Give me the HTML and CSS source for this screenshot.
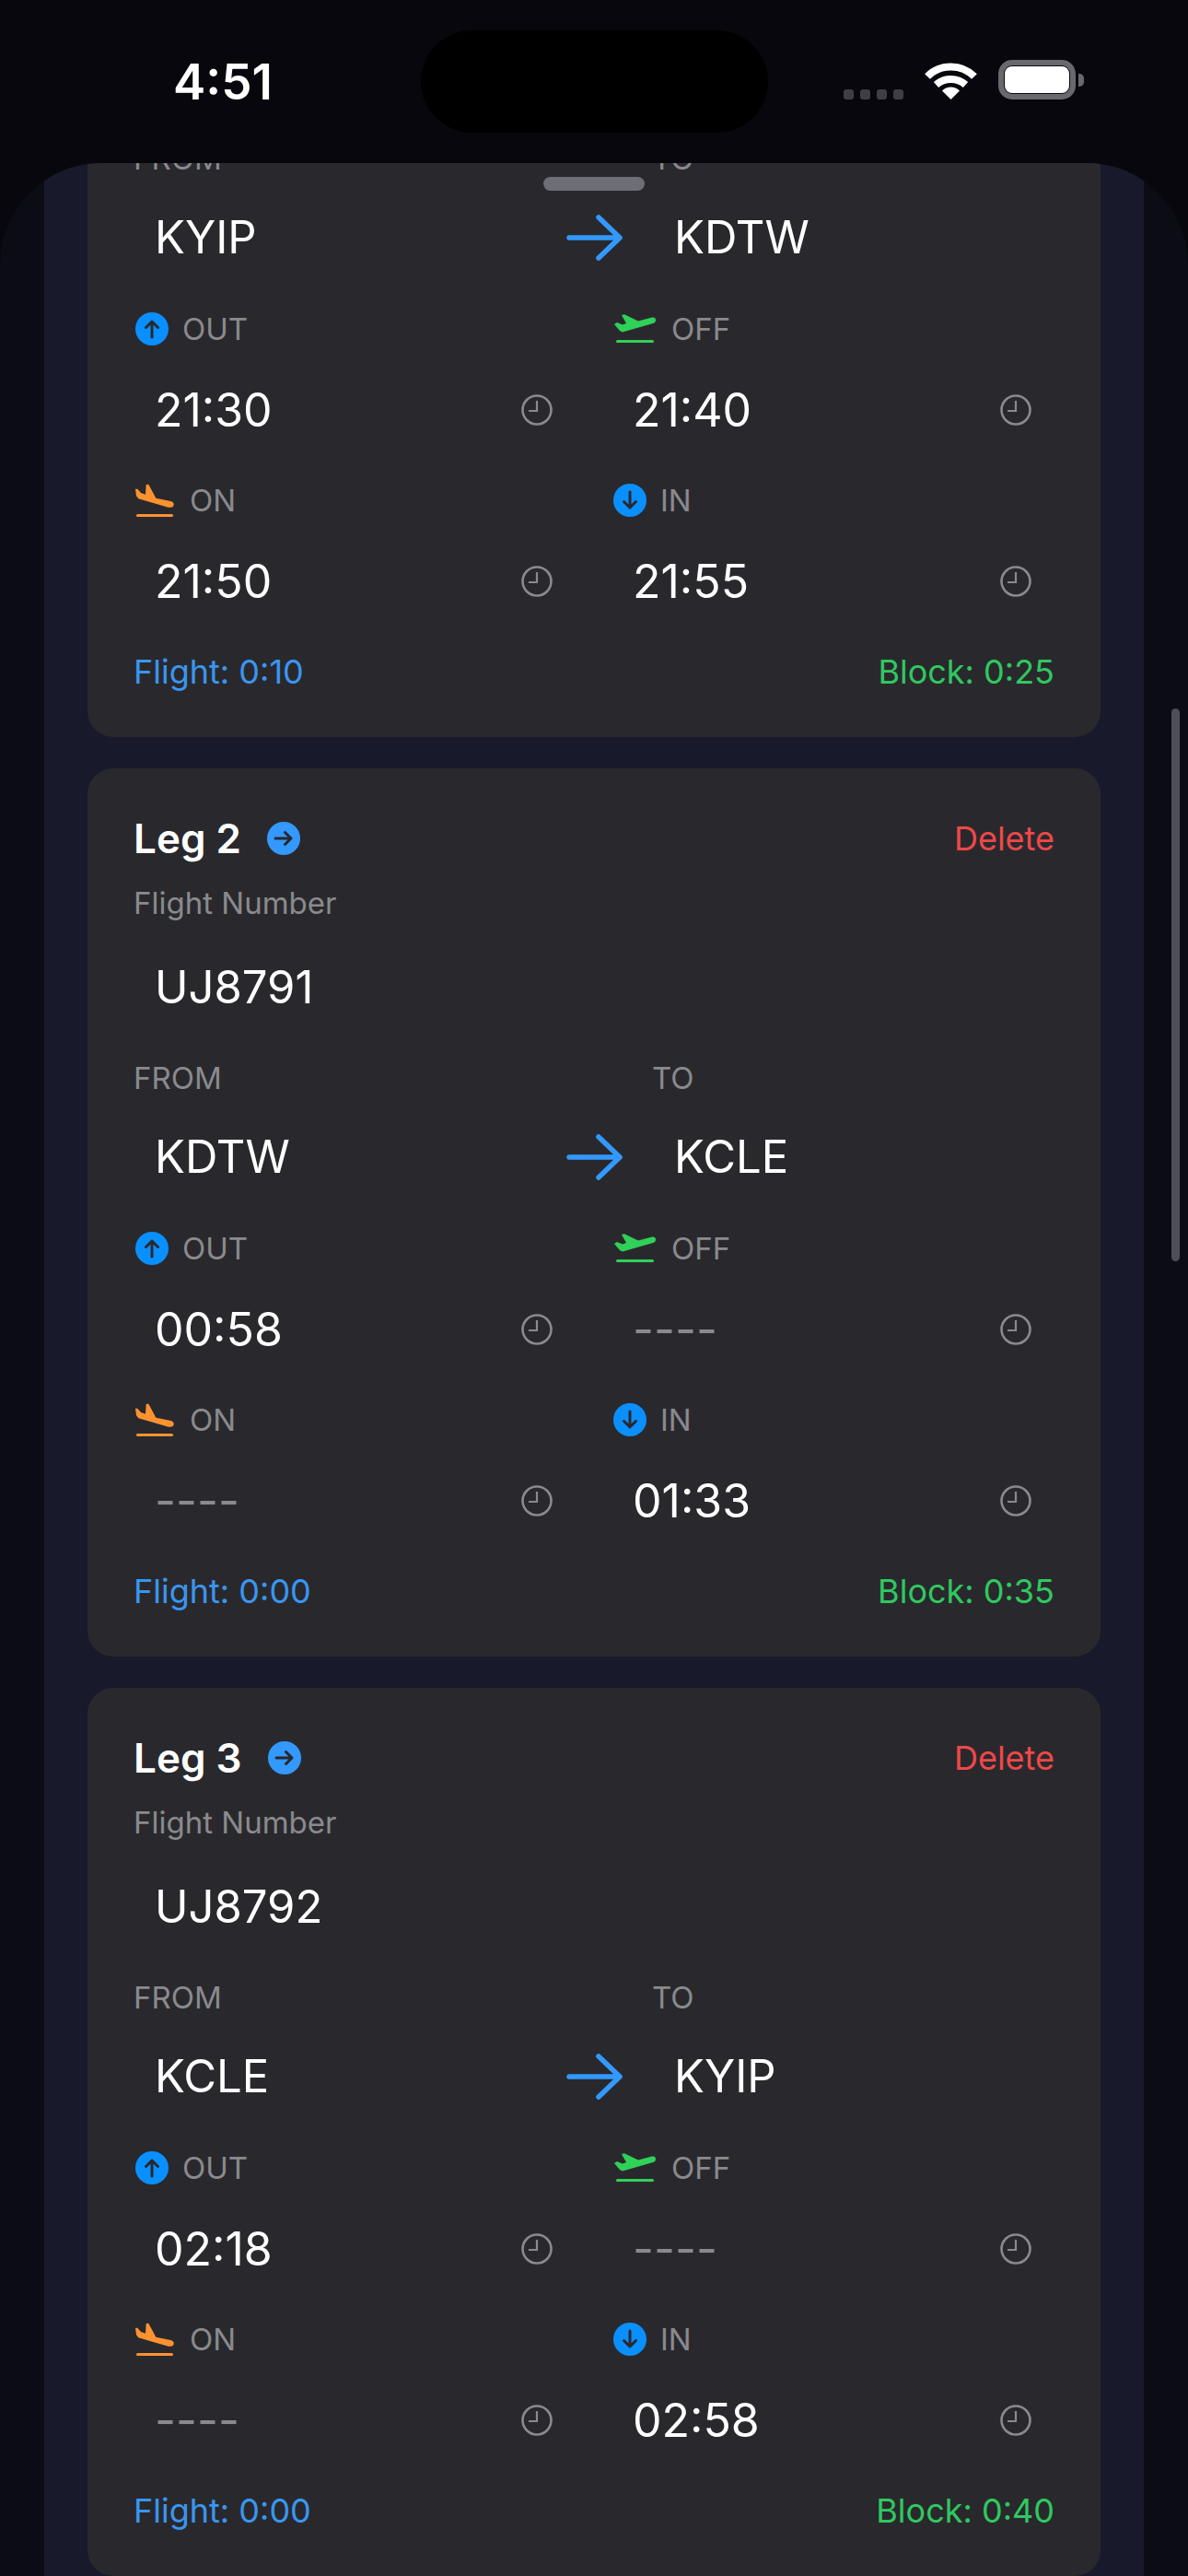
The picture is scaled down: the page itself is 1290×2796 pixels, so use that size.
FILE: index.html
```html
<!DOCTYPE html>
<html lang="en">
  <head>
    <meta charset="UTF-8" />
    <meta name="viewport" content="width=device-width, initial-scale=1.0" />
    <title>Legs</title>
    <link rel="stylesheet" href="styles.css">
  </head>

  <body>
    <svg class="defs" width="0" height="0">
      <symbol id="out" viewBox="0 0 36 36">
        <circle cx="18" cy="18" r="18" fill="#0a8fff" />
        <path d="M18 27V10M11.5 16.5L18 10l6.5 6.5" fill="none" stroke="#28282d" stroke-width="3" stroke-linecap="round" stroke-linejoin="round" />
      </symbol>
      <symbol id="in" viewBox="0 0 36 36">
        <circle cx="18" cy="18" r="18" fill="#0a8fff" />
        <path d="M18 9v17M11.5 19.5L18 26l6.5-6.5" fill="none" stroke="#28282d" stroke-width="3" stroke-linecap="round" stroke-linejoin="round" />
      </symbol>
      <symbol id="off" viewBox="0 0 45 32">
        <path d="M0 11L3 9L9 11.5L13 10L8 1L11 .3L26 7.5L41 3.5Q45 3 45 6.5Q45 9 42 10L9 19.5L6 18Z" fill="#30d158" />
        <rect x="2" y="28" width="41" height="3" rx="1.5" fill="#30d158" />
      </symbol>
      <symbol id="on" viewBox="0 0 42 36">
        <path d="M0 5.7L2.3 5.7L6 10L11 11.7L11.7 1L14.3 .7L22.3 15.7L38.3 19Q41.7 20 41.7 22.5Q41.5 25.7 38 25.7Q36 25.7 35 25.5L3.3 16.3L1 13.3Z" fill="#ff9230" />
        <rect x="1" y="33" width="40" height="3" rx="1.5" fill="#ff9230" />
      </symbol>
      <symbol id="clock" viewBox="0 0 34 34">
        <circle cx="17" cy="17" r="15.5" fill="none" stroke="#8a8a8e" stroke-width="2.6" />
        <path d="M17 7v11h-9" fill="none" stroke="#8a8a8e" stroke-width="2.2" />
      </symbol>
      <symbol id="go" viewBox="0 0 36 36">
        <circle cx="18" cy="18" r="18" fill="#3399ff" />
        <path d="M9 18h17M19.5 11.5L26 18l-6.5 6.500" fill="none" stroke="#28282d" stroke-width="3" stroke-linecap="round" stroke-linejoin="round" />
      </symbol>
      <symbol id="arrow" viewBox="0 0 62 50">
        <path d="M3 25h55M35 3l23 22l-23 22" fill="none" stroke="#3399ff" stroke-width="5.500" stroke-linecap="round" stroke-linejoin="round" />
      </symbol>
    </svg>

    <header class="status">
      <span class="klok">4:51</span>
      <div class="island"></div>
      <div class="status-ikoner">
        <div class="signal"><i></i><i></i><i></i><i></i></div>
        <svg class="wifi" viewBox="0 0 57 42">
          <path d="M3 17A36 36 0 0 1 54 17M12.5 26A24 24 0 0 1 44.500 26" fill="none" stroke="#fff" stroke-width="8" />
          <path d="M28.500 42L19 32.500A13.400 13.400 0 0 1 38 32.500Z" fill="#fff" />
        </svg>
        <div class="batteri"><div class="batteri-fyld"></div></div>
      </div>
    </header>

    <main class="sheet">
      <div class="grabber"></div>
      <div class="scrollbar"></div>
      <div class="liste">

        <!-- scrollet halvt ud af billedet, toppen af kortet ses ikke -->
        <article class="kort kort-scrollet">
          <div class="rute">
            <div>
              <p class="label">FROM</p>
              <p class="vaerdi">KYIP</p>
            </div>
            <svg class="rute-pil"><use href="#arrow" /></svg>
            <div>
              <p class="label">TO</p>
              <p class="vaerdi">KDTW</p>
            </div>
          </div>
          <div class="tider">
            <div>
              <p class="label tid-label"><svg class="ikon-rund"><use href="#out" /></svg>OUT</p>
              <div class="tid"><span>21:30</span><svg class="ur"><use href="#clock" /></svg></div>
            </div>
            <div>
              <p class="label tid-label"><svg class="ikon-off"><use href="#off" /></svg>OFF</p>
              <div class="tid"><span>21:40</span><svg class="ur"><use href="#clock" /></svg></div>
            </div>
            <div>
              <p class="label tid-label"><svg class="ikon-on"><use href="#on" /></svg>ON</p>
              <div class="tid"><span>21:50</span><svg class="ur"><use href="#clock" /></svg></div>
            </div>
            <div>
              <p class="label tid-label"><svg class="ikon-rund"><use href="#in" /></svg>IN</p>
              <div class="tid"><span>21:55</span><svg class="ur"><use href="#clock" /></svg></div>
            </div>
          </div>
          <div class="total">
            <span class="flight">Flight: 0:10</span>
            <span class="block">Block: 0:25</span>
          </div>
        </article>

        <article class="kort">
          <div class="kort-top">
            <h2>Leg 2</h2>
            <svg class="ikon-go"><use href="#go" /></svg>
            <span class="slet">Delete</span>
          </div>
          <p class="label">Flight Number</p>
          <p class="vaerdi">UJ8791</p>
          <div class="rute">
            <div>
              <p class="label">FROM</p>
              <p class="vaerdi">KDTW</p>
            </div>
            <svg class="rute-pil"><use href="#arrow" /></svg>
            <div>
              <p class="label">TO</p>
              <p class="vaerdi">KCLE</p>
            </div>
          </div>
          <div class="tider">
            <div>
              <p class="label tid-label"><svg class="ikon-rund"><use href="#out" /></svg>OUT</p>
              <div class="tid"><span>00:58</span><svg class="ur"><use href="#clock" /></svg></div>
            </div>
            <div>
              <p class="label tid-label"><svg class="ikon-off"><use href="#off" /></svg>OFF</p>
              <div class="tid"><span class="tom">----</span><svg class="ur"><use href="#clock" /></svg></div>
            </div>
            <div>
              <p class="label tid-label"><svg class="ikon-on"><use href="#on" /></svg>ON</p>
              <div class="tid"><span class="tom">----</span><svg class="ur"><use href="#clock" /></svg></div>
            </div>
            <div>
              <p class="label tid-label"><svg class="ikon-rund"><use href="#in" /></svg>IN</p>
              <div class="tid"><span>01:33</span><svg class="ur"><use href="#clock" /></svg></div>
            </div>
          </div>
          <div class="total">
            <span class="flight">Flight: 0:00</span>
            <span class="block">Block: 0:35</span>
          </div>
        </article>

        <article class="kort">
          <div class="kort-top">
            <h2>Leg 3</h2>
            <svg class="ikon-go"><use href="#go" /></svg>
            <span class="slet">Delete</span>
          </div>
          <p class="label">Flight Number</p>
          <p class="vaerdi">UJ8792</p>
          <div class="rute">
            <div>
              <p class="label">FROM</p>
              <p class="vaerdi">KCLE</p>
            </div>
            <svg class="rute-pil"><use href="#arrow" /></svg>
            <div>
              <p class="label">TO</p>
              <p class="vaerdi">KYIP</p>
            </div>
          </div>
          <div class="tider">
            <div>
              <p class="label tid-label"><svg class="ikon-rund"><use href="#out" /></svg>OUT</p>
              <div class="tid"><span>02:18</span><svg class="ur"><use href="#clock" /></svg></div>
            </div>
            <div>
              <p class="label tid-label"><svg class="ikon-off"><use href="#off" /></svg>OFF</p>
              <div class="tid"><span class="tom">----</span><svg class="ur"><use href="#clock" /></svg></div>
            </div>
            <div>
              <p class="label tid-label"><svg class="ikon-on"><use href="#on" /></svg>ON</p>
              <div class="tid"><span class="tom">----</span><svg class="ur"><use href="#clock" /></svg></div>
            </div>
            <div>
              <p class="label tid-label"><svg class="ikon-rund"><use href="#in" /></svg>IN</p>
              <div class="tid"><span>02:58</span><svg class="ur"><use href="#clock" /></svg></div>
            </div>
          </div>
          <div class="total">
            <span class="flight">Flight: 0:00</span>
            <span class="block">Block: 0:40</span>
          </div>
        </article>

      </div>
    </main>
  </body>
</html>
```

FILE: styles.css
```css
* {
  box-sizing: border-box;
}

html,
body {
  height: 2796px;
  overflow: hidden;
}

body {
  margin: 0;
  background-color: #07070d;
  font-family: Inter, "Liberation Sans", sans-serif;
  color: #fff;
}

p,
h2 {
  margin: 0;
}

svg {
  display: block;
  flex-shrink: 0;
}

.defs {
  position: absolute;
}

/* statusbar */
.status {
  height: 177px;
  padding: 33px 112px 0 188px;
  display: flex;
  align-items: flex-start;
}

.klok {
  width: 269px;
  margin-top: 24px;
  font-size: 53px;
  line-height: 64px;
  font-weight: 600;
}

.island {
  width: 377px;
  height: 111px;
  border-radius: 56px;
  background-color: #000;
}

.status-ikoner {
  margin: 32px 0 0 82px;
  display: flex;
  align-items: flex-end;
}

.signal {
  display: flex;
  gap: 7px;
  margin-right: 23px;
}

.signal i {
  width: 11px;
  height: 11px;
  border-radius: 3px;
  background-color: #3e3e44;
}

.wifi {
  width: 57px;
  height: 42px;
}

.batteri {
  position: relative;
  width: 84px;
  height: 43px;
  margin-left: 23px;
  padding: 1px;
  border: 6px solid #68686e;
  border-radius: 15px;
}

.batteri::after {
  content: "";
  position: absolute;
  left: 81px;
  top: 9px;
  width: 6px;
  height: 14px;
  border-radius: 0 5px 5px 0;
  background-color: #68686e;
}

.batteri-fyld {
  height: 29px;
  border-radius: 8px;
  background-color: #fff;
}

/* sheet */
.sheet {
  position: relative;
  height: 2619px;
  padding: 0 48px;
  overflow: hidden;
  border-radius: 110px 110px 0 0;
  background-color: #0c0c14;
}

.grabber {
  position: absolute;
  left: 590px;
  top: 15px;
  width: 110px;
  height: 15px;
  border-radius: 8px;
  background-color: #6e6e76;
}

.scrollbar {
  position: absolute;
  left: 1272px;
  top: 592px;
  width: 9px;
  height: 600px;
  border-radius: 5px;
  background-color: #4e4e56;
}

.liste {
  display: flow-root;
  height: 100%;
  padding: 0 47px;
  background-color: #19192c;
}

.kort {
  height: 964px;
  margin-bottom: 34px;
  padding: 50px;
  border-radius: 28px;
  background-color: #29292d;
}

/* kortet er scrollet, saa kun bunden er tilbage */
.kort-scrollet {
  height: 647px;
  margin-top: -24px;
  padding-top: 0;
}

.kort-scrollet .rute {
  margin-top: 0;
}

.kort-top {
  height: 52px;
  margin-bottom: 25px;
  display: flex;
  align-items: center;
}

h2 {
  font-size: 44px;
  line-height: 52px;
  font-weight: 600;
}

.ikon-go {
  width: 36px;
  height: 36px;
  margin-left: 28px;
}

.slet {
  margin-left: auto;
  font-size: 36px;
  color: #f04848;
}

.label {
  height: 40px;
  font-size: 33px;
  line-height: 38px;
  color: #8a8a8e;
}

.vaerdi {
  height: 70px;
  margin-top: 36px;
  padding-left: 23px;
  font-size: 49px;
  line-height: 70px;
}

.rute {
  margin-top: 44px;
  display: grid;
  grid-template-columns: 439px 62px 1fr;
  column-gap: 31px;
}

.rute .vaerdi {
  margin-top: 30px;
}

.rute > div:last-child .vaerdi {
  padding-left: 24px;
}

.rute-pil {
  width: 62px;
  height: 50px;
  align-self: end;
  margin-bottom: 10px;
}

.tider {
  margin-top: 44px;
  display: grid;
  grid-template-columns: 1fr 1fr;
  column-gap: 40px;
  row-gap: 43px;
}

.tid-label {
  padding-left: 2px;
  display: flex;
  align-items: center;
  gap: 17px;
  line-height: 40px;
}

.ikon-rund {
  width: 36px;
  height: 36px;
  margin-right: -2px;
}

.tider > div:nth-child(4) .ikon-rund {
  margin-left: -1px;
}

.ikon-off {
  width: 45px;
  height: 32px;
}

.ikon-on {
  width: 42px;
  height: 36px;
}

.tid {
  height: 70px;
  margin-top: 33px;
  padding: 0 25px 0 23px;
  display: flex;
  justify-content: space-between;
  align-items: center;
  font-size: 50px;
}

.tider > div:nth-child(even) .tid {
  padding-left: 22px;
}

.tom {
  color: #8a8a8e;
}

.ur {
  width: 34px;
  height: 34px;
}

.total {
  margin-top: 44px;
  display: flex;
  justify-content: space-between;
  font-size: 36px;
  line-height: 38px;
}

.flight {
  color: #3a96f0;
}

.block {
  color: #30c860;
}
```
